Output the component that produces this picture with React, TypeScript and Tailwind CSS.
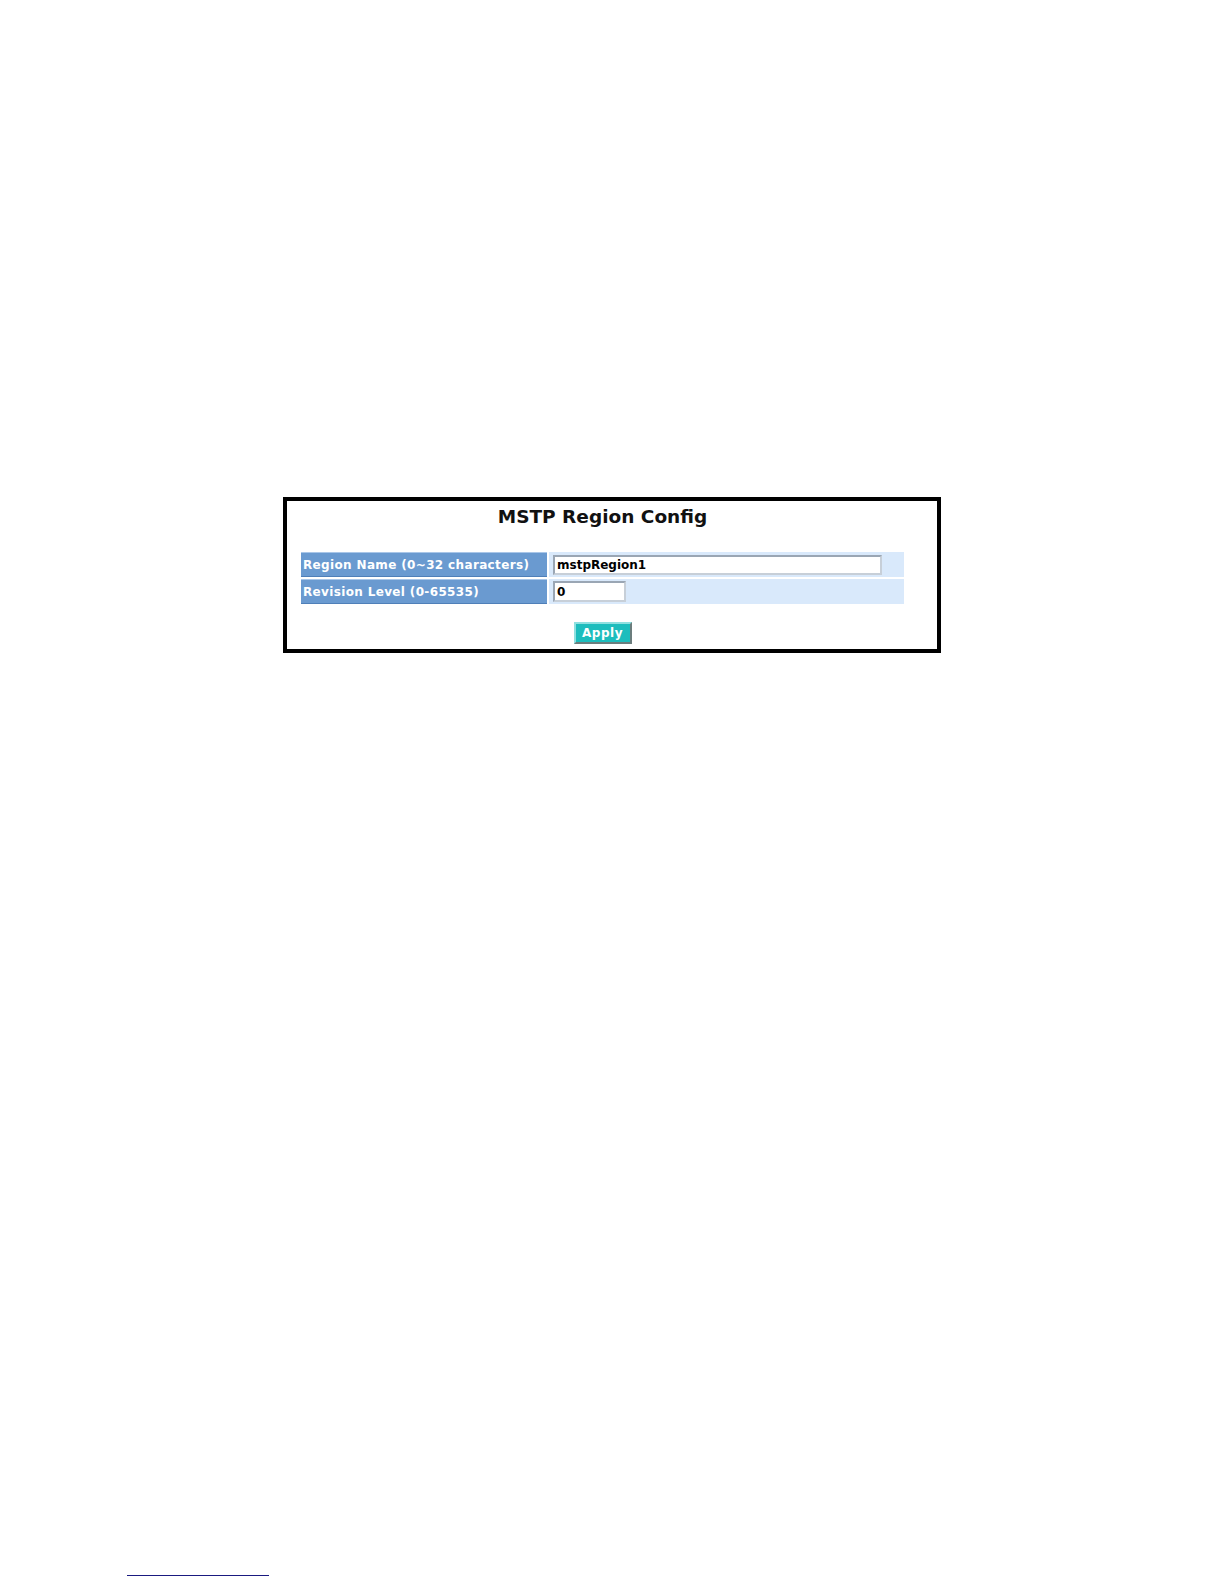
import React from 'react';

const font = { fontFamily: '"DejaVu Sans", Verdana, sans-serif' };

const Row = ({ label, children }: { label: string; children: React.ReactNode }) => (
  <div className="flex gap-[2px] h-[25px]">
    <div className="w-[246px] bg-[#6a9ad0] border-t border-t-[#a9c6e8] border-b border-b-[#4f7fb8] flex items-center pl-[2px] text-white text-[12px] font-bold tracking-[0.35px]">
      {label}
    </div>
    <div className="flex-1 bg-[#d9e9fb] flex items-center pl-[4px]">{children}</div>
  </div>
);

const App = () => {
  return (
    <div className="w-[1224px] h-[1584px] bg-white relative" style={font}>
      <div className="pt-[497px] pl-[283px]">
        <div className="w-[658px] border-[4px] border-black pl-[14px] pr-[33px] pt-[5px] pb-[5px]">
          <h1 className="text-center text-[18.5px] font-bold text-[#111] leading-[22px]">MSTP Region Config</h1>
          <div className="mt-[24px] flex flex-col gap-[2px]">
            <Row label="Region Name (0~32 characters)">
              <input
                defaultValue="mstpRegion1"
                className="w-[329px] h-[20px] bg-white border-2 border-t-[#9aa6b4] border-l-[#9aa6b4] border-r-[#c7cfd8] border-b-[#c7cfd8] px-[2px] text-[12px] font-bold text-black outline-none"
                style={font}
              />
            </Row>
            <Row label="Revision Level (0-65535)">
              <input
                defaultValue="0"
                className="w-[73px] h-[21px] bg-white border-2 border-t-[#9aa6b4] border-l-[#9aa6b4] border-r-[#c7cfd8] border-b-[#c7cfd8] px-[2px] text-[12px] font-bold text-black outline-none"
                style={font}
              />
            </Row>
          </div>
          <div className="flex justify-center mt-[18px]">
            <button
              className="w-[58px] h-[22px] bg-[#1dbdbd] text-white text-[12px] font-bold border-2 border-t-[#8fe0e0] border-l-[#8fe0e0] border-r-[#6b7d7d] border-b-[#6b7d7d] leading-none tracking-[0.5px]"
              style={font}
            >
              Apply
            </button>
          </div>
        </div>
      </div>
      <div className="absolute left-[127px] top-[1575px] w-[142px] h-px bg-[#1a1a80]" />
    </div>
  );
};

export default App;
